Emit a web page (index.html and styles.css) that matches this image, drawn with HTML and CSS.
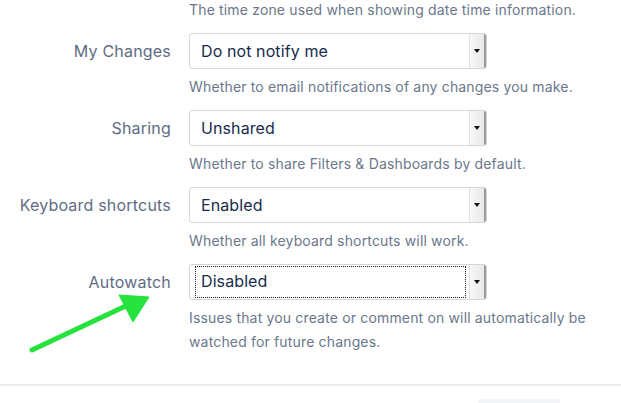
FILE: index.html
```html
<!DOCTYPE html>
<html>
<head>
<meta charset="utf-8">
<link rel="stylesheet" href="styles.css">
</head>
<body>
<div class="page">
  <div class="form">
    <div class="row first">
      <div class="label"></div>
      <div class="field"><div class="desc">The time zone used when showing date time information.</div></div>
    </div>
    <div class="row">
      <div class="label">My Changes</div>
      <div class="field">
        <div class="select"><span class="value">Do not notify me</span><span class="arrow"></span></div>
        <div class="desc">Whether to email notifications of any changes you make.</div>
      </div>
    </div>
    <div class="row">
      <div class="label">Sharing</div>
      <div class="field">
        <div class="select"><span class="value">Unshared</span><span class="arrow"></span></div>
        <div class="desc">Whether to share Filters &amp; Dashboards by default.</div>
      </div>
    </div>
    <div class="row">
      <div class="label">Keyboard shortcuts</div>
      <div class="field">
        <div class="select"><span class="value">Enabled</span><span class="arrow"></span></div>
        <div class="desc">Whether all keyboard shortcuts will work.</div>
      </div>
    </div>
    <div class="row">
      <div class="label">Autowatch</div>
      <div class="field">
        <div class="select focused"><span class="value">Disabled</span><span class="arrow"></span></div>
        <div class="desc">Issues that you create or comment on will automatically be watched for future changes.</div>
      </div>
    </div>
  </div>
  <div class="footer">
    <div class="button"></div>
  </div>
  <svg class="pointer" width="170" height="80" viewBox="0 0 170 80">
    <defs><filter id="soft"><feGaussianBlur stdDeviation="0.6"/></filter></defs>
    <g filter="url(#soft)" fill="#25e23c" stroke="#25e23c">
      <line x1="32" y1="70" x2="130" y2="24" stroke-width="5" stroke-linecap="round"/>
      <polygon points="119,15 149,17 133,42" stroke-width="1" stroke-linejoin="round"/>
    </g>
  </svg>
</div>
</body>
</html>
```
FILE: styles.css
```css
html, body {
  margin: 0;
  padding: 0;
  background: #ffffff;
}
body {
  font-family: Inter, "Liberation Sans", Arial, sans-serif;
  width: 621px;
  height: 403px;
  overflow: hidden;
}
.page {
  position: relative;
  width: 621px;
  height: 403px;
  overflow: hidden;
}
.form {
  display: flex;
  flex-direction: column;
  gap: 11px;
}
.row {
  display: grid;
  grid-template-columns: 171px 410px;
  column-gap: 18px;
  align-items: start;
}
.row.first {
  margin-top: -2px;
}
.label {
  text-align: right;
  font-size: 16px;
  letter-spacing: 0.2px;
  color: #5e6c84;
  line-height: 36px;
  height: 36px;
  white-space: nowrap;
}
.row.first .label {
  height: 0;
}
.field {
  display: flex;
  flex-direction: column;
  align-items: flex-start;
}
.select {
  width: 298px;
  height: 36px;
  box-sizing: border-box;
  border: 1px solid #d3d6dc;
  border-radius: 3px;
  display: flex;
  align-items: stretch;
  background: #ffffff;
  overflow: hidden;
}
.value {
  flex: 1;
  font-size: 16px;
  letter-spacing: 0.1px;
  color: #172b4d;
  line-height: 34px;
  padding-left: 11px;
}
.focused .value {
  margin: 2px 4px 2px 6px;
  padding-left: 5px;
  line-height: 28px;
  outline: 1px dotted #222;
}
.arrow {
  width: 14px;
  position: relative;
  background: linear-gradient(to right, #f7f7f7, #e9e9e9);
  border-left: 1px solid #e2e2e2;
  border-right: 2px solid #9a9a9a;
}
.arrow::after {
  content: "";
  position: absolute;
  left: 4px;
  top: 15px;
  border-left: 3px solid transparent;
  border-right: 3px solid transparent;
  border-top: 4px solid #111;
}
.desc {
  margin-top: 6px;
  font-size: 14px;
  letter-spacing: 0.16px;
  line-height: 24px;
  color: #6b778c;
}
.row.first .desc {
  margin-top: 0;
}
.footer {
  margin-top: 30px;
  border-top: 2px solid #ebecf0;
  display: flex;
  justify-content: flex-start;
  padding-left: 478px;
  padding-top: 13px;
}
.button {
  width: 82px;
  height: 6px;
  background: #f4f5f7;
  border-radius: 3px 3px 0 0;
}
.pointer {
  position: absolute;
  left: 0;
  top: 280px;
}
```
